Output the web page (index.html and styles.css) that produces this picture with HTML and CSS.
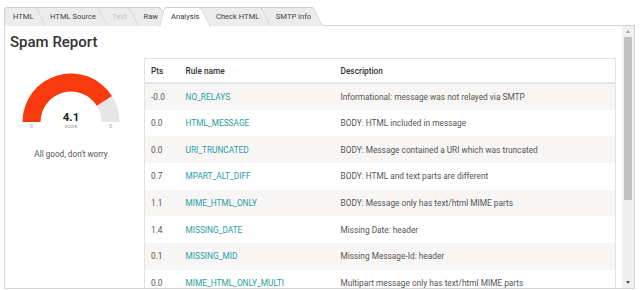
FILE: index.html
```html
<!DOCTYPE html>
<html>
    <head>
        <title>Message - Analysis</title>
        <link rel="stylesheet" href="styles.css">
    </head>
    <body>
        <!-- tab strip -->
        <nav class="tabs">
            <span class="tab tab-first">HTML</span>
            <span class="tab">HTML Source</span>
            <span class="tab tab-disabled">Text</span>
            <span class="tab">Raw</span>
            <span class="tab tab-active">Analysis</span>
            <span class="tab">Check HTML</span>
            <span class="tab">SMTP info</span>
        </nav>

        <div class="frame">
            <div class="frame-content">
                <h1 class="report-title">Spam Report</h1>

                <div class="report-body">
                    <!-- score gauge -->
                    <div class="score-column">
                        <svg class="gauge" width="122" height="80" viewBox="0 0 122 80">
                            <path d="M12.5 64 A48.5 48.5 0 0 1 109.5 64 L91.5 64 A30.5 30.5 0 0 0 30.5 64 Z" fill="#e8e6e5"/>
                            <path d="M12.5 64 A48.5 48.5 0 0 1 101.95 38 L86.75 47.66 A30.5 30.5 0 0 0 30.5 64 Z" fill="#f83a0c"/>
                            <text x="61" y="63" class="gauge-value" text-anchor="middle">4.1</text>
                            <text x="61" y="70" class="gauge-label" text-anchor="middle">score</text>
                            <text x="21.5" y="70" class="gauge-label" text-anchor="middle">0</text>
                            <text x="100.5" y="70" class="gauge-label" text-anchor="middle">5</text>
                        </svg>
                        <p class="score-message">All good, don't worry</p>
                    </div>

                    <!-- rules table -->
                    <div class="rules-wrap">
                        <table class="rules">
                            <thead>
                                <tr><th class="col-pts">Pts</th><th class="col-rule">Rule name</th><th>Description</th></tr>
                            </thead>
                            <tbody>
                                <tr><td>-0.0</td><td class="rule">NO_RELAYS</td><td>Informational: message was not relayed via SMTP</td></tr>
                                <tr><td>0.0</td><td class="rule">HTML_MESSAGE</td><td>BODY: HTML included in message</td></tr>
                                <tr><td>0.0</td><td class="rule">URI_TRUNCATED</td><td>BODY: Message contained a URI which was truncated</td></tr>
                                <tr><td>0.7</td><td class="rule">MPART_ALT_DIFF</td><td>BODY: HTML and text parts are different</td></tr>
                                <tr><td>1.1</td><td class="rule">MIME_HTML_ONLY</td><td>BODY: Message only has text/html MIME parts</td></tr>
                                <tr><td>1.4</td><td class="rule">MISSING_DATE</td><td>Missing Date: header</td></tr>
                                <tr><td>0.1</td><td class="rule">MISSING_MID</td><td>Missing Message-Id: header</td></tr>
                                <tr><td>0.0</td><td class="rule">MIME_HTML_ONLY_MULTI</td><td>Multipart message only has text/html MIME parts</td></tr>
                            </tbody>
                        </table>
                    </div>
                </div>
            </div>

            <!-- scrollbar -->
            <div class="scrollbar">
                <span class="scroll-arrow scroll-up"></span>
                <div class="scroll-track"><div class="scroll-thumb"></div></div>
                <span class="scroll-arrow scroll-down"></span>
            </div>
        </div>
    </body>
</html>
```

FILE: styles.css
```css
body {
    margin: 0;
    background-color: #ffffff;
    font-family: "Roboto", "Open Sans", sans-serif;
    color: #444;
    overflow: hidden;
}

/* tabs with a slanted right edge */
.tabs {
    display: flex;
    align-items: flex-end;
    height: 26px;
    padding-left: 4px;
    box-sizing: border-box;
}
.tab {
    position: relative;
    height: 19px;
    box-sizing: border-box;
    padding: 0 2px 0 14.5px;
    background-color: #ececec;
    border-top: 1px solid #d0d0d0;
    font-size: 7.6px;
    line-height: 18px;
    color: #444;
    white-space: nowrap;
}
.tab::after {
    content: "";
    position: absolute;
    top: -1px;
    left: 100%;
    width: 10px;
    height: calc(100% + 1px);
    box-sizing: border-box;
    background-color: inherit;
    border-top: 1px solid #d0d0d0;
    border-right: 1px solid #d0d0d0;
    border-radius: 0 3px 0 0;
    transform: skewX(26deg);
    transform-origin: bottom left;
    z-index: -1;
}
.tab-first {
    padding-left: 8px;
    border-left: 1px solid #d0d0d0;
    border-radius: 3px 0 0 0;
}
.tab:nth-child(1) { z-index: 9; }
.tab:nth-child(2) { z-index: 8; }
.tab:nth-child(3) { z-index: 7; }
.tab:nth-child(4) { z-index: 6; }
.tab:nth-child(6) { z-index: 4; }
.tab:nth-child(7) { z-index: 3; }
.tab-disabled {
    color: #c4c4c4;
}
.tab-active {
    z-index: 20;
    height: 20px;
    margin-bottom: -1px;
    padding-left: 6px;
    margin-left: 5px;
    background-color: #ffffff;
    color: #333;
}
.tab-active::before {
    content: "";
    position: absolute;
    top: -1px;
    right: 100%;
    width: 6px;
    height: calc(100% + 1px);
    box-sizing: border-box;
    background-color: #ffffff;
    border-top: 1px solid #d0d0d0;
    border-left: 1px solid #d0d0d0;
    border-radius: 3px 0 0 0;
    transform: skewX(-14deg);
    transform-origin: bottom right;
    z-index: -1;
}

/* framed panel */
.frame {
    display: flex;
    height: 264px;
    margin: -1px 5px 0 4px;
    border: 1px solid #d5d5d5;
    box-sizing: border-box;
}
.frame-content {
    flex: 1;
    overflow: hidden;
    padding: 6px 6px 0 5px;
}
.report-title {
    margin: 0 0 6px 0;
    font-size: 15px;
    font-weight: 500;
    line-height: 20px;
    color: #333;
}
.report-body {
    display: flex;
    gap: 12px;
}

.score-column {
    width: 122px;
    flex-shrink: 0;
    text-align: center;
}
.gauge {
    display: block;
}
.gauge-value {
    font-size: 11.5px;
    font-weight: 700;
    fill: #222;
}
.gauge-label {
    font-size: 5px;
    fill: #999;
}
.score-message {
    margin: 11px 0 0 0;
    font-size: 8.2px;
    color: #555;
}

/* rules table */
.rules-wrap {
    flex: 1;
}
.rules {
    width: 100%;
    table-layout: fixed;
    border-collapse: collapse;
    border: 1px solid #e3e3e3;
    font-size: 8.3px;
    text-align: left;
}
.rules th {
    height: 24.5px;
    box-sizing: border-box;
    padding: 0 6px;
    border-bottom: 2px solid #e6e6e6;
    font-weight: 500;
    color: #333;
}
.rules td {
    height: 26.67px;
    box-sizing: border-box;
    padding: 0 6px;
    color: #555;
    white-space: nowrap;
}
.rules .col-pts {
    width: 35px;
}
.rules .col-rule {
    width: 155px;
}
.rules tbody tr:nth-child(odd) {
    background-color: #f7f6f5;
}
.rules td.rule {
    color: #1f9ea0;
}

/* fake scrollbar */
.scrollbar {
    display: flex;
    flex-direction: column;
    align-items: center;
    width: 12px;
    background-color: #f0f0f0;
    padding-top: 4px;
    box-sizing: border-box;
}
.scroll-arrow {
    width: 0;
    height: 0;
    border-left: 2.5px solid transparent;
    border-right: 2.5px solid transparent;
}
.scroll-up {
    border-bottom: 3px solid #a3a3a3;
}
.scroll-down {
    border-top: 3px solid #505050;
    margin-bottom: 4px;
}
.scroll-track {
    flex: 1;
    width: 100%;
    padding: 4px 1px;
    box-sizing: border-box;
}
.scroll-thumb {
    height: 163px;
    margin: 0 1px;
    background-color: #c1c1c1;
}
```
